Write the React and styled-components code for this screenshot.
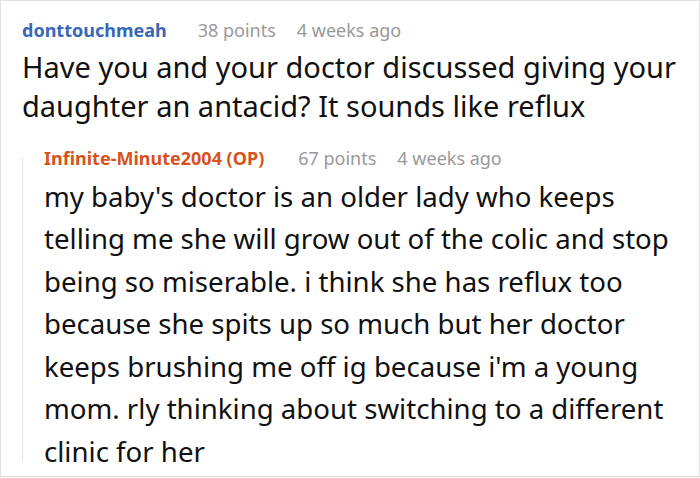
import React from "react";
import styled, { createGlobalStyle } from "styled-components";

const GlobalStyle = createGlobalStyle`
  html, body {
    margin: 0;
    padding: 0;
    background: #ffffff;
  }
  body {
    font-family: "Noto Sans", "Open Sans", sans-serif;
  }
`;

const Frame = styled.div`
  box-sizing: border-box;
  width: 700px;
  height: 477px;
  border: 1px solid #e2e2e2;
  border-bottom-color: #d8d8d8;
  padding: 15px 0 0 21px;
  overflow: hidden;
`;

const Comment = styled.div`
  display: flex;
  flex-direction: column;
`;

const Meta = styled.div`
  display: flex;
  align-items: baseline;
  gap: 21px;
  font-size: 18px;
  line-height: 28px;
`;

const Author = styled.span`
  font-weight: 700;
  color: ${(p) => p.color};
  margin-right: ${(p) => p.space || 10}px;
`;

const Muted = styled.span`
  color: #999999;
`;

const Body = styled.p`
  margin: 3px 0 0;
  font-size: 29px;
  line-height: 39px;
  color: #111111;
`;

const Reply = styled.div`
  display: flex;
  gap: 21px;
  margin-top: 19px;
`;

const Thread = styled.div`
  flex: 0 0 1px;
  margin: 13px 0 12px;
  background: #e2e2e2;
`;

const ReplyContent = styled.div`
  flex: 1;
  display: flex;
  flex-direction: column;
`;

const ReplyBody = styled.p`
  margin: 2.5px 0 0;
  font-size: 27.6px;
  line-height: 42.5px;
  color: #111111;
`;

export default function App() {
  return (
    <>
      <GlobalStyle />
      <Frame>
        <Comment>
          <Meta>
            <Author color="#3768b8">donttouchmeah</Author>
            <Muted>38 points</Muted>
            <Muted>4 weeks ago</Muted>
          </Meta>
          <Body>
            Have you and your doctor discussed giving your daughter an antacid? It sounds like reflux
          </Body>
        </Comment>
        <Reply>
          <Thread />
          <ReplyContent>
            <Meta>
              <Author color="#d6531c" space={13}>Infinite-Minute2004 (OP)</Author>
              <Muted>67 points</Muted>
              <Muted>4 weeks ago</Muted>
            </Meta>
            <ReplyBody>
              my baby's doctor is an older lady who keeps telling me she will grow out of the colic and stop
              being so miserable. i think she has reflux too because she spits up so much but her doctor
              keeps brushing me off ig because i'm a young mom. rly thinking about switching to a different
              clinic for her
            </ReplyBody>
          </ReplyContent>
        </Reply>
      </Frame>
    </>
  );
}
